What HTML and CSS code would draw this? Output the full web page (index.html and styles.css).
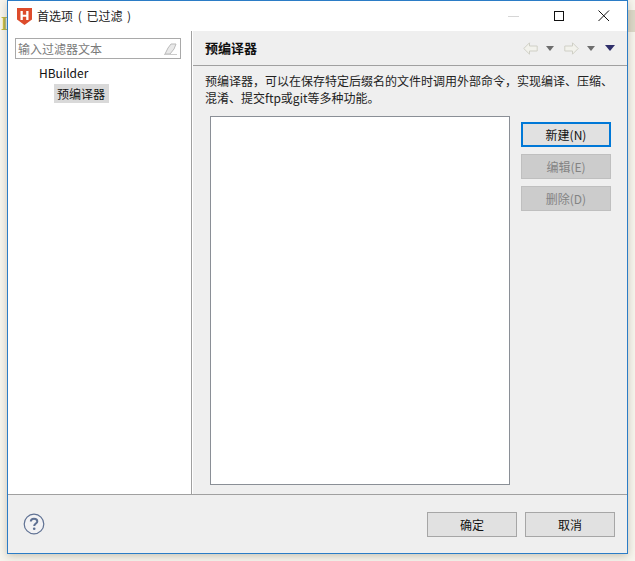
FILE: index.html
```html
<!DOCTYPE html>
<html lang="zh">
<head>
<meta charset="utf-8">
<title>首选项</title>
<link rel="stylesheet" href="styles.css">
</head>
<body>
<div class="backdrop-band"></div>
<span class="backdrop-glyph">I</span>
<div class="window">
  <header class="titlebar">
    <svg class="logo" width="15" height="17" viewBox="0 0 15 17">
      <path d="M0 0H15V11.500L7.500 17L0 11.500Z" fill="#dd4b2b"/>
      <path d="M3.500 3H5.800V6.800H9.200V3H11.500V12H9.200V8.800H5.800V12H3.500Z" fill="#fff"/>
    </svg>
    <span class="title">首选项 ( 已过滤 )</span>
    <div class="controls">
      <svg width="12" height="12" viewBox="0 0 12 12"><path d="M0 6.500H11" stroke="#d6d6d6"/></svg>
      <svg width="12" height="12" viewBox="0 0 12 12"><rect x="1.500" y="1.500" width="9" height="9" fill="none" stroke="#111"/></svg>
      <svg width="12" height="12" viewBox="0 0 12 12"><path d="M.5 .5L11 11M11 .5L.5 11" stroke="#111" fill="none"/></svg>
    </div>
  </header>
  <div class="body">
    <aside class="side">
      <div class="filter">
        <span>输入过滤器文本</span>
        <svg width="13" height="13" viewBox="0 0 13 13"><path d="M1 12L4 6L7 2H12L10 7L6 12Z" fill="#e9e9e9" stroke="#bbb"/><path d="M0 12.500H13" stroke="#ccc"/></svg>
      </div>
      <div class="tree-root">HBuilder</div>
      <div class="tree-leaf"><span>预编译器</span></div>
    </aside>
    <main class="pane">
      <div class="pane-head">
        <h1>预编译器</h1>
        <div class="nav">
          <svg class="nav-arrow" width="15" height="13" viewBox="0 0 15 13"><path d="M.8 6.500L6.500 .8V4H14.200V9H6.500V12.200Z" fill="#f2f2ec" stroke="#cfcfc6"/></svg>
          <i class="caret"></i>
          <svg class="nav-arrow next" width="15" height="13" viewBox="0 0 15 13"><path d="M14.200 6.500L8.500 .8V4H.8V9H8.500V12.200Z" fill="#f2f2ec" stroke="#cfcfc6"/></svg>
          <i class="caret"></i>
          <i class="caret dark"></i>
        </div>
      </div>
      <p class="desc">预编译器，可以在保存特定后缀名的文件时调用外部命令，实现编译、压缩、<br>混淆、提交ftp或git等多种功能。</p>
      <div class="content">
        <div class="list"></div>
        <div class="actions">
          <button class="btn primary">新建(N)</button>
          <button class="btn disabled">编辑(E)</button>
          <button class="btn disabled">删除(D)</button>
        </div>
      </div>
    </main>
  </div>
  <footer class="footer">
    <svg class="help" width="22" height="22" viewBox="0 0 22 22">
      <circle cx="11" cy="11" r="9.800" fill="#f2f2f4" stroke="#5f7193" stroke-width="1.200"/>
      <path d="M7.800 8.500C7.800 6.600 9.200 5.700 11 5.700C12.900 5.700 14.300 6.700 14.300 8.400C14.300 10.400 11.200 10.600 11.200 13" fill="none" stroke="#5f7193" stroke-width="2"/>
      <circle cx="11.200" cy="15.800" r="1.300" fill="#5f7193"/>
    </svg>
    <div class="footer-btns">
      <button class="btn">确定</button>
      <button class="btn">取消</button>
    </div>
  </footer>
</div>
</body>
</html>
```
FILE: styles.css
```css
* { box-sizing: border-box; }
html, body { margin: 0; height: 100%; }
body {
  position: relative;
  background: #f7f5ee;
  font-family: "Noto Sans CJK SC", "Noto Sans", "Liberation Sans", sans-serif;
  font-size: 12px;
  color: #111;
  overflow: hidden;
}
.backdrop-band {
  position: absolute;
  right: 0;
  top: 10px;
  width: 7px;
  height: 22px;
  background: #dcd8c8;
}
.backdrop-glyph {
  position: absolute;
  left: 1px;
  top: 14px;
  font: 700 18px/20px "Liberation Serif", serif;
  color: #b5b54a;
}
.window {
  position: relative;
  width: 621px;
  height: 554px;
  margin-left: 7px;
  display: flex;
  flex-direction: column;
  background: #fff;
  border: 1px solid #2b7cc6;
  box-shadow: 0 2px 8px rgba(90, 80, 50, .3);
}
.titlebar {
  height: 30px;
  flex: none;
  display: flex;
  align-items: center;
  padding-left: 9px;
  background: #fff;
}
.title { margin-left: 5px; line-height: 16px; color: #222; white-space: pre; word-spacing: 2px; }
.controls {
  margin-left: auto;
  display: flex;
  gap: 33px;
  padding-right: 17px;
  margin-top: -1px;
}
.body { flex: 1; display: flex; min-height: 0; }
.side {
  width: 184px;
  flex: none;
  background: #fff;
  border-right: 1px solid #a0a0a0;
  padding: 7px 0 0 7px;
}
.filter {
  width: 166px;
  height: 21px;
  border: 1px solid #a9a9a9;
  display: flex;
  align-items: center;
  justify-content: space-between;
  padding: 0 3px 0 2px;
  color: #7a7a7a;
  line-height: 16px;
}
.tree-root { margin: 4px 0 1px 24px; line-height: 20px; }
.tree-leaf { margin-left: 39px; line-height: 19px; }
.tree-leaf span { display: inline-block; background: #d9d9d9; padding: 0 4px 0 3px; }
.pane {
  flex: 1;
  background: #efefef;
  display: flex;
  flex-direction: column;
  min-width: 0;
  border-left: 1px solid #fff;
}
.pane-head {
  height: 35px;
  flex: none;
  display: flex;
  align-items: center;
  justify-content: space-between;
  border-bottom: 1px solid #a0a0a0;
  padding: 0 12px 0 12px;
}
.pane-head h1 { margin: 0; font-size: 13px; font-weight: 700; line-height: 18px; }
.nav { display: flex; align-items: center; }
.nav-arrow { margin-right: 8px; }
.nav-arrow.next { margin-left: 10px; }
.caret {
  width: 0;
  height: 0;
  border: 4px solid transparent;
  border-top: 5px solid #6d6d6d;
  border-bottom: 0;
}
.caret.dark {
  margin-left: 10px;
  border-width: 5px;
  border-top: 6px solid #2f2f6a;
  border-bottom: 0;
}
.desc {
  margin: 6px 0 0 12px;
  line-height: 17px;
  flex: none;
  white-space: nowrap;
  color: #222;
}
.content {
  flex: 1;
  display: flex;
  padding: 10px 16px 9px 17px;
  min-height: 0;
}
.list {
  width: 300px;
  background: #fff;
  border: 1px solid #8a8f96;
}
.actions {
  margin: 6px 0 0 11px;
  display: flex;
  flex-direction: column;
  gap: 7px;
}
.btn {
  width: 90px;
  height: 25px;
  padding: 0 0 1px;
  font: inherit;
  color: #111;
  background: #e1e1e1;
  border: 1px solid #a6a6a6;
}
.btn.primary { border: 2px solid #0078d7; }
.btn.disabled { background: #cccccc; border-color: #bfbfbf; color: #838383; }
.footer {
  height: 59px;
  flex: none;
  background: #efefef;
  border-top: 1px solid #a0a0a0;
  display: flex;
  align-items: flex-start;
  justify-content: space-between;
  padding: 17px 12px 0 15px;
}
.help { margin-top: 1px; }
.footer-btns { display: flex; gap: 8px; }
```
